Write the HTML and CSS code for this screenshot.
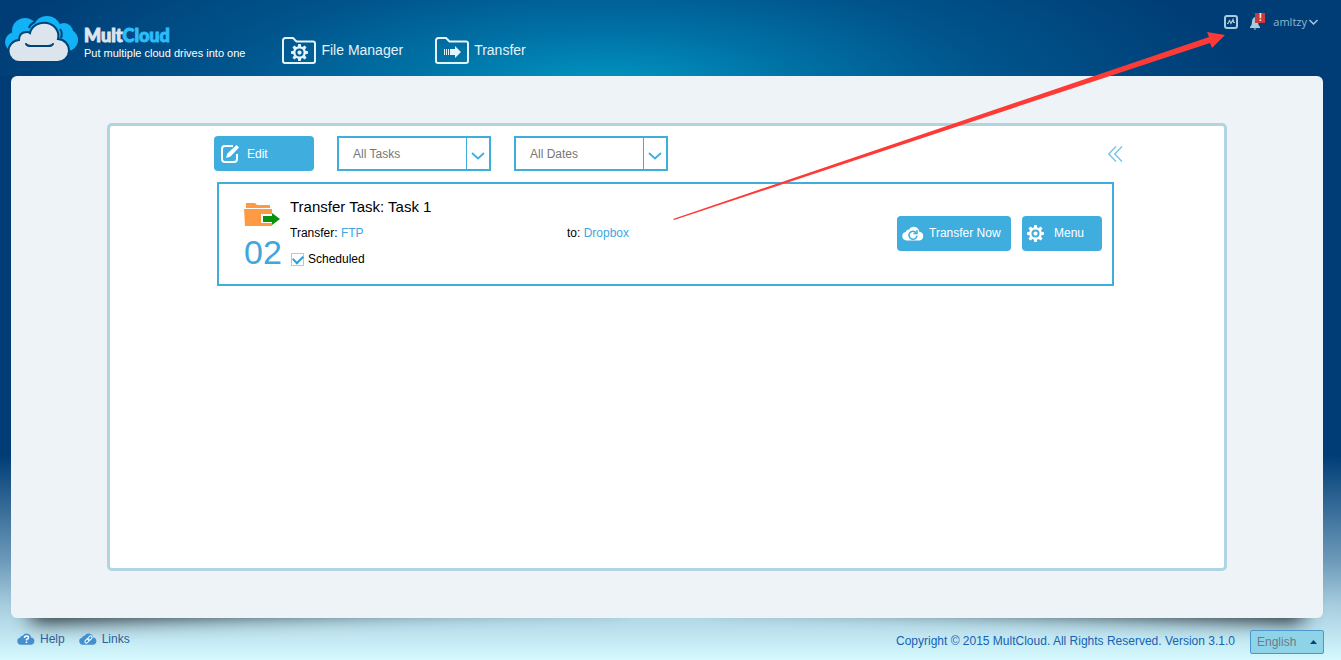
FILE: index.html
```html
<!DOCTYPE html>
<html lang="en">
<head>
    <meta charset="UTF-8">
    <meta name="viewport" content="width=device-width, initial-scale=1.0">
    <title>MultCloud - Scheduled Tasks</title>
    <link rel="stylesheet" href="styles.css">
</head>
<body>
    <!-- Shared icon shapes -->
    <svg class="symbols" aria-hidden="true">
        <symbol id="gear" viewBox="0 0 16 16">
            <path fill-rule="evenodd" d="M6.8 0h2.4l.4 2.4 1.3.5 2-1.4 1.7 1.7-1.4 2 .5 1.2 2.3.4v2.4l-2.3.4-.5 1.3 1.4 2-1.7 1.7-2-1.4-1.3.5-.4 2.3H6.8l-.4-2.3-1.3-.5-2 1.4-1.7-1.7 1.4-2-.5-1.3L0 9.200V6.800l2.300-.4.5-1.200-1.400-2 1.700-1.700 2 1.400 1.300-.5zM8 4.200a3.800 3.800 0 1 0 0 7.600 3.800 3.800 0 0 0 0-7.600zM8 6a2 2 0 1 1 0 4 2 2 0 0 1 0-4z"/>
        </symbol>
        <symbol id="cloud" viewBox="0 0 22 14">
            <path d="M4.500 14a4.300 4.300 0 0 1-.8-8.500A3.200 3.200 0 0 1 7 3a5.600 5.600 0 0 1 10.300 2.300A4.400 4.400 0 0 1 17.600 14z"/>
        </symbol>
        <symbol id="folder" viewBox="0 0 34 27">
            <path d="M1 3.500Q1 1 3.500 1H11l3.500 3.500H31q2 0 2 2V24q0 2-2 2H3q-2 0-2-2z" fill="none" stroke="#e4f2f9" stroke-width="2"/>
        </symbol>
    </svg>

    <header class="header">
        <a class="brand" href="#">
            <svg class="brand-icon" width="74" height="48" viewBox="0 0 74 48" aria-hidden="true">
                <g fill="#12b2f6">
                    <circle cx="20" cy="15" r="13"/>
                    <circle cx="42" cy="14" r="14"/>
                    <circle cx="10" cy="26" r="10"/>
                    <circle cx="59" cy="16" r="9"/>
                    <circle cx="62" cy="24" r="11"/>
                    <path d="M12 20h50v14H12z"/>
                </g>
                <path d="M24 12q1-4 6-6M55 13q3 4 1 9" fill="none" stroke="#004377" stroke-width="2"/>
                <path d="M15 46a11 11 0 0 1-1-22q0-8 8-8 2 0 3 1a14 13 0 0 1 28 6 11.500 11.500 0 0 1-1 23z" fill="#dce5ee" stroke="#004377" stroke-width="2"/>
                <path d="M21 28q1 2 5 2h17q4 0 5-2" fill="none" stroke="#004377" stroke-width="2" stroke-linecap="round"/>
            </svg>
            <span class="brand-text">
                <strong class="brand-name">Mult<span>Cloud</span></strong>
                <span class="slogan">Put multiple cloud drives into one</span>
            </span>
        </a>

        <nav class="main-nav">
            <a href="#">
                <svg width="34" height="27" aria-hidden="true">
                    <use href="#folder"/>
                    <use href="#gear" x="9" y="7" width="17" height="17" fill="#e4f2f9"/>
                </svg>
                File Manager
            </a>
            <a href="#">
                <svg width="34" height="27" aria-hidden="true">
                    <use href="#folder"/>
                    <path d="M9 12h1v6H9zM11 12h1v6h-1zM13 12h1v6h-1zM15 12h5V9l6 6-6 6v-3h-5z" fill="#e4f2f9"/>
                </svg>
                Transfer
            </a>
        </nav>

        <div class="account">
            <button type="button" aria-label="Activity">
                <svg width="14" height="14" viewBox="0 0 14 14" fill="none" stroke="#a9cbdc">
                    <rect x="1" y="1" width="12" height="12" rx="2" stroke-width="2"/>
                    <path d="M3 8.500h1l1.500-3 1.500 3 2-4 .8 3H11" stroke-width="1.200"/>
                </svg>
            </button>
            <button type="button" class="bell" aria-label="Notifications">
                <svg width="10" height="13" viewBox="0 0 10 13" fill="#a9cbdc">
                    <path d="M5 0q3 1 3 5 0 3 2 5v1H0v-1q2-2 2-5 0-4 3-5zM3.500 11.500h3L5 13z"/>
                </svg>
                <span class="badge">!</span>
            </button>
            <button type="button" class="user">
                amltzy
                <svg width="9" height="6" viewBox="0 0 9 6" fill="none" stroke="#a9cbdc" stroke-width="1.500"><path d="M.5 1l4 4 4-4"/></svg>
            </button>
        </div>
    </header>

    <main class="content">
        <section class="panel">
            <div class="toolbar">
                <button type="button" class="btn btn-edit">
                    <svg width="19" height="19" viewBox="0 0 19 19" fill="none" stroke="#fff" stroke-width="2" aria-hidden="true">
                        <path d="M12 2H4Q1 2 1 5v10q0 3 3 3h9q3 0 3-3v-5"/>
                        <path d="M5 14l1.500-4.500L15.500 1 18 3.500 9.500 12.500z" fill="#fff" stroke="none"/>
                    </svg>
                    Edit
                </button>
                <div class="dropdown">
                    <select aria-label="Tasks">
                        <option>All Tasks</option>
                    </select>
                    <svg width="24" height="31" viewBox="0 0 24 31" aria-hidden="true"><path d="M1.500 0v31"/><path d="M7 15l6 5.500 6-5.500" stroke-width="1.700"/></svg>
                </div>
                <div class="dropdown">
                    <select aria-label="Dates">
                        <option>All Dates</option>
                    </select>
                    <svg width="24" height="31" viewBox="0 0 24 31" aria-hidden="true"><path d="M1.500 0v31"/><path d="M7 15l6 5.500 6-5.500" stroke-width="1.700"/></svg>
                </div>
                <button type="button" class="collapse" aria-label="Collapse">
                    <svg width="15" height="16" viewBox="0 0 15 16" fill="none" stroke="#7cc6e6" stroke-width="1.500"><path d="M8 .5L.8 8 8 15.500M14 .5L6.800 8l7.200 7.500"/></svg>
                </button>
            </div>

            <article class="task">
                <div class="task-id">
                    <svg width="36" height="24" viewBox="0 0 36 24" aria-hidden="true">
                        <path d="M2 0h9l2 2h13v3H2zM0 6h28v17H1z" fill="#ff9a43"/>
                        <path d="M17 11h11v9H17z" fill="#fff"/>
                        <path d="M19 13h9v-3l8 6-8 6v-3h-9z" fill="#0b920b"/>
                    </svg>
                    <span class="number">02</span>
                </div>
                <div class="task-info">
                    <h2>Transfer Task: Task 1</h2>
                    <div class="route">
                        <span>Transfer: <a href="#">FTP</a></span>
                        <span>to: <a href="#">Dropbox</a></span>
                    </div>
                    <label class="scheduled">
                        <input type="checkbox" checked>
                        Scheduled
                    </label>
                </div>
                <div class="task-actions">
                    <button type="button" class="btn btn-transfer">
                        <svg width="22" height="15" aria-hidden="true">
                            <use href="#cloud" width="22" height="15" fill="#fff"/>
                            <path d="M14 6.500a4 4 0 1 0 1 3M15 4v3.500h-3.500" fill="none" stroke="#40addf" stroke-width="1.500"/>
                        </svg>
                        Transfer Now
                    </button>
                    <button type="button" class="btn btn-menu">
                        <svg width="17" height="17" fill="#fff" aria-hidden="true"><use href="#gear"/></svg>
                        Menu
                    </button>
                </div>
            </article>
        </section>
    </main>

    <footer class="footer">
        <nav class="footer-nav">
            <a href="#">
                <svg width="18" height="12" aria-hidden="true">
                    <use href="#cloud" width="18" height="12" fill="#438fd0"/>
                    <path d="M7.500 5q0-2 2-2t2 1.500-2 2v1M9.500 8.500v1.500" fill="none" stroke="#fff" stroke-width="1.500"/>
                </svg>
                Help
            </a>
            <a href="#">
                <svg width="18" height="12" aria-hidden="true">
                    <use href="#cloud" width="18" height="12" fill="#438fd0"/>
                    <g transform="rotate(-45 9.500 6.500)" fill="none" stroke="#fff"><rect x="5" y="5" width="5" height="3" rx="1.500"/><rect x="9" y="5" width="5" height="3" rx="1.500"/></g>
                </svg>
                Links
            </a>
        </nav>
        <p class="copyright">Copyright © 2015 MultCloud. All Rights Reserved. Version 3.1.0</p>
        <div class="language">
            <select aria-label="Language">
                <option>English</option>
            </select>
            <svg width="7" height="4" viewBox="0 0 7 4" aria-hidden="true"><path d="M0 4l3.500-4L7 4z" fill="#00457f"/></svg>
        </div>
    </footer>

    <!-- Pointer to the activity icon -->
    <svg class="pointer" width="552" height="190" viewBox="0 0 552 190" aria-hidden="true">
        <path d="M0 188L536 6l-2-5 18 3-13 13-2-5L1 189z" fill="#fd3a36"/>
    </svg>
</body>
</html>
```
FILE: styles.css
```css
* {
    box-sizing: border-box;
}
body {
    font-family: "Liberation Sans", Arial, sans-serif;
    font-size: 12px;
    margin: 0;
    min-height: 100vh;
    display: flex;
    flex-direction: column;
    position: relative;
    /* Glow behind the header, sky at the bottom */
    background:
        radial-gradient(ellipse 640px 190px at 45% 90px, #0099c4, rgba(0, 128, 178, 0.8) 30%, rgba(0, 100, 155, 0.6) 60%, rgba(0, 61, 118, 0)) no-repeat 0 0 / 100% 76px,
        linear-gradient(#003d76 69%, #6d9aba 85%, #a9cfe0 92%, #d5f9fe);
}
button,
select {
    font-family: inherit;
    font-size: 12px;
    cursor: pointer;
}
button {
    border: 0;
    padding: 0;
    background: none;
}
a {
    color: #40a6dd;
    text-decoration: none;
}
svg {
    display: block;
    flex: none;
}
.symbols {
    position: absolute;
    width: 0;
    height: 0;
}

/* Header */
.header {
    height: 76px;
    display: flex;
    padding: 0 23px 0 5px;
}
.brand {
    display: flex;
    gap: 5px;
    padding-top: 16px;
    color: #fff;
}
.brand-text {
    display: flex;
    flex-direction: column;
    padding-top: 8px;
}
.brand-name {
    font-family: Lato, sans-serif;
    font-size: 18px;
    font-weight: 900;
    line-height: 22px;
    color: #dce5ee;
    -webkit-text-stroke: 1px;
}
.brand-name span {
    color: #2cbcfa;
}
.slogan {
    font-size: 11px;
    line-height: 14px;
}
.main-nav {
    display: flex;
    gap: 32px;
    padding-top: 37px;
    margin-left: 37px;
}
.main-nav a {
    display: flex;
    gap: 5px;
    height: 27px;
    font-size: 14px;
    line-height: 26px;
    color: #e4f2f9;
}
.account {
    display: flex;
    align-items: center;
    gap: 12px;
    height: 14px;
    margin: 15px 0 0 auto;
}
.bell {
    position: relative;
    width: 23px;
    margin-right: -12px;
}
.bell svg {
    margin-top: 2px;
}
.badge {
    position: absolute;
    top: -2px;
    left: 5px;
    width: 10px;
    height: 10px;
    background: #c9393d;
    color: #fff;
    font-size: 10px;
    font-weight: bold;
    line-height: 10px;
}
.user {
    display: flex;
    align-items: center;
    gap: 2px;
    font-family: "Open Sans", sans-serif;
    font-size: 11px;
    line-height: 16px;
    color: #8fb8d3;
}

/* Main area with lifted corners */
.content {
    flex: 1;
    display: flex;
    position: relative;
    margin: 0 18px 0 11px;
    padding: 47px 96px;
    border-radius: 6px;
    background: #edf3f6;
}
.content::before,
.content::after {
    content: "";
    position: absolute;
    z-index: -1;
    bottom: 10px;
    width: 45%;
    height: 30px;
    box-shadow: 0 14px 20px rgba(0, 0, 0, 0.85);
}
.content::before {
    left: 20px;
    transform-origin: left bottom;
    transform: rotate(-2deg);
}
.content::after {
    right: 20px;
    transform-origin: right bottom;
    transform: rotate(2deg);
}
.panel {
    flex: 1;
    border: 3px solid #b0d4e2;
    border-radius: 5px;
    background: #fff;
    padding: 10px 110px 10px 107px;
}
.toolbar {
    display: flex;
    gap: 23px;
    margin: 0 -9px 11px -3px;
}
.btn {
    display: flex;
    align-items: center;
    gap: 5px;
    height: 35px;
    padding: 0 8px 0 5px;
    border-radius: 4px;
    background: #40addf;
    color: #fff;
}
.btn-edit {
    width: 100px;
    padding: 0 7px;
    gap: 7px;
}
.dropdown {
    display: grid;
    width: 154px;
    height: 35px;
    border: 2px solid #40addf;
}
.dropdown select {
    grid-area: 1 / 1;
    appearance: none;
    border: 0;
    padding: 0 30px 0 14px;
    background: #fff;
    color: #777;
}
.dropdown svg {
    grid-area: 1 / 1;
    justify-self: end;
    pointer-events: none;
    fill: none;
    stroke: #40addf;
}
.collapse {
    margin-left: auto;
}

/* Task card */
.task {
    display: flex;
    border: 2px solid #40addf;
    padding: 10px 10px 12px 25px;
}
.task-id {
    width: 46px;
    padding-top: 9px;
}
.number {
    display: block;
    margin-bottom: -5px;
    font-size: 34px;
    line-height: 50px;
    color: #40a6dd;
}
.task-info {
    flex: 1;
    line-height: 26px;
}
.task-info h2 {
    margin: 0;
    font-size: 15px;
    font-weight: normal;
}
.route {
    display: grid;
    grid-template-columns: 277px 1fr;
}
.scheduled {
    display: flex;
    align-items: center;
    gap: 4px;
}
.scheduled input {
    appearance: none;
    width: 13px;
    height: 13px;
    margin: 0 0 0 1px;
    border: 1px solid #c4c4c4;
    display: grid;
    place-items: center;
}
.scheduled input:checked::before {
    content: "";
    width: 8px;
    height: 5px;
    border: solid #2b9fdb;
    border-width: 0 0 2px 2px;
    transform: translateY(-1px) rotate(-45deg);
}
.task-actions {
    display: flex;
    align-items: center;
    gap: 11px;
}
.btn-transfer {
    width: 114px;
}
.btn-menu {
    width: 80px;
    gap: 10px;
}

/* Footer */
.footer {
    height: 42px;
    display: flex;
    padding: 12px 17px;
    position: relative;
}
.footer-nav {
    display: flex;
    gap: 14px;
}
.footer-nav a {
    display: flex;
    align-items: center;
    gap: 5px;
    height: 18px;
    color: #2c5f9b;
}
.copyright {
    margin: 0 15px 0 auto;
    line-height: 22px;
    color: #1463b4;
}
.language {
    display: grid;
    align-items: center;
    width: 74px;
    height: 24px;
}
.language select {
    grid-area: 1 / 1;
    appearance: none;
    height: 24px;
    padding: 0 6px;
    border: 1px solid #4c97cc;
    border-radius: 2px;
    background: #8ed3e7;
    color: #6c7c8c;
}
.language svg {
    grid-area: 1 / 1;
    justify-self: end;
    margin-right: 7px;
    pointer-events: none;
}

.pointer {
    position: absolute;
    top: 31px;
    left: 673px;
    pointer-events: none;
}
```
